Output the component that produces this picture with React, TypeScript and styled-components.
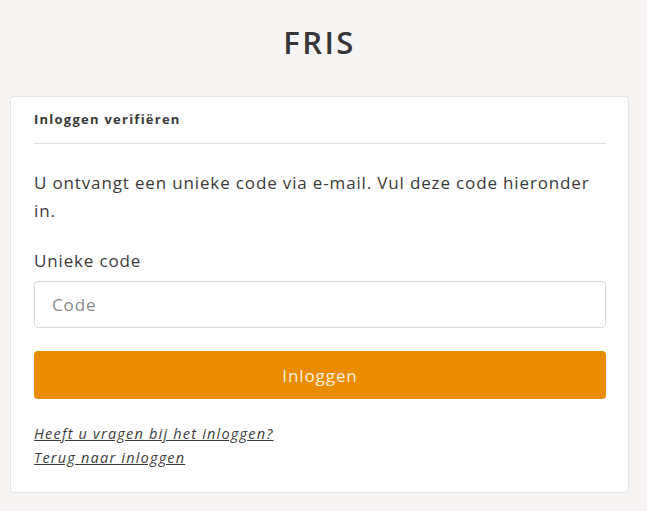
import styled, { createGlobalStyle } from "styled-components";

const GlobalStyle = createGlobalStyle`
  html, body {
    margin: 0;
    padding: 0;
    background: #f6f5f3;
    font-family: "Open Sans", "Noto Sans", Arial, sans-serif;
    color: #333;
  }
  * { box-sizing: border-box; }
`;

const Page = styled.div`
  display: flex;
  flex-direction: column;
  align-items: stretch;
  padding: 0 18px 0 10px;
`;

const Title = styled.h1`
  margin: 0;
  height: 96px;
  display: flex;
  align-items: center;
  justify-content: center;
  padding-bottom: 13px;
  font-weight: 600;
  font-size: 31px;
  color: #363636;
  letter-spacing: 2.4px;
`;

const Card = styled.div`
  background: #fff;
  border: 1px solid #e2e5ea;
  border-radius: 4px;
  padding: 0 22px 24px 23px;
`;

const CardHeader = styled.div`
  font-weight: 700;
  font-size: 13px;
  letter-spacing: 1.25px;
  color: #3a3a3a;
  padding: 13px 0 15px;
  border-bottom: 1px solid #dde1e7;
`;

const Intro = styled.p`
  margin: 25px 0 0;
  font-size: 17px;
  letter-spacing: 0.85px;
  line-height: 28px;
  color: #3a3a3a;
`;

const Label = styled.label`
  display: block;
  margin-top: 24px;
  font-size: 17px;
  letter-spacing: 0.85px;
  line-height: 24px;
  color: #3a3a3a;
`;

const Input = styled.input`
  display: block;
  width: 100%;
  height: 47px;
  margin-top: 8px;
  padding: 0 17px;
  border: 1px solid #d5d9de;
  border-radius: 4px;
  font-family: inherit;
  font-size: 17px;
  letter-spacing: 0.85px;
  color: #333;
  outline: none;
  &::placeholder { color: #8a8a8a; }
`;

const Button = styled.button`
  display: block;
  width: 100%;
  height: 48px;
  margin-top: 23px;
  border: none;
  border-radius: 4px;
  background: #ea8c00;
  color: #fdeede;
  font-family: inherit;
  font-size: 17px;
  letter-spacing: 0.9px;
  cursor: pointer;
`;

const Links = styled.div`
  display: flex;
  flex-direction: column;
  margin-top: 25px;
  gap: 4px;
`;

const HelpLink = styled.a`
  font-size: 14.5px;
  line-height: 20px;
  letter-spacing: 1.2px;
  font-style: italic;
  color: #3d3d3d;
  text-decoration: underline;
  align-self: flex-start;
`;

export default function App() {
  return (
    <>
      <GlobalStyle />
      <Page>
        <Title>FRIS</Title>
        <Card>
          <CardHeader>Inloggen verifiëren</CardHeader>
          <Intro>U ontvangt een unieke code via e-mail. Vul deze code hieronder in.</Intro>
          <Label htmlFor="code">Unieke code</Label>
          <Input id="code" placeholder="Code" />
          <Button>Inloggen</Button>
          <Links>
            <HelpLink href="#">Heeft u vragen bij het inloggen?</HelpLink>
            <HelpLink href="#">Terug naar inloggen</HelpLink>
          </Links>
        </Card>
      </Page>
    </>
  );
}
